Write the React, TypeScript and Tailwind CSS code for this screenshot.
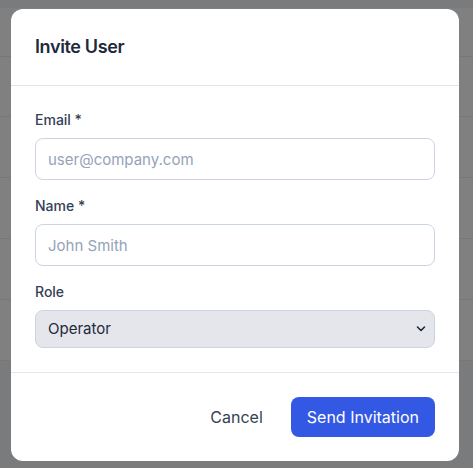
import React from "react";

export default function App() {
  const rows = [49, 60, 61, 61, 61, 61];
  return (
    <div className="relative h-[468px] w-[473px] overflow-hidden bg-[#7a7b7c]" style={{ fontFamily: "Inter, 'Noto Sans', sans-serif" }}>
      <div className="mt-[8px] flex flex-col">
        {rows.map((h, i) => (
          <div key={i} className="border-b border-[#767778] bg-[#808080]" style={{ height: h }} />
        ))}
      </div>
      <div className="absolute inset-0 flex items-start justify-center pt-[9px]">
        <div className="ml-[-3px] w-[448px] rounded-xl bg-white">
          <div className="border-b border-[#e2e4ec] px-6 pt-6 pb-6">
            <h2 className="text-lg font-semibold leading-7 tracking-[-0.02em] text-[#1e293b]">Invite User</h2>
          </div>
          <div className="flex flex-col gap-4 border-b border-[#e2e8f0] p-6">
            <div className="flex flex-col gap-2">
              <label className="text-sm font-medium leading-5 text-[#334155]">Email *</label>
              <input
                className="h-[42px] rounded-lg border border-[#cbd5e1] px-3 text-[15px] text-[#1e293b] outline-none placeholder:text-[#94a3b8]"
                placeholder="user@company.com"
              />
            </div>
            <div className="flex flex-col gap-2">
              <label className="text-sm font-medium leading-5 text-[#334155]">Name *</label>
              <input
                className="h-[42px] rounded-lg border border-[#cbd5e1] px-3 text-[15px] text-[#1e293b] outline-none placeholder:text-[#94a3b8]"
                placeholder="John Smith"
              />
            </div>
            <div className="flex flex-col gap-2">
              <label className="text-sm font-medium leading-5 text-[#334155]">Role</label>
              <div className="relative h-[38px] rounded-lg border border-[#cbd5e1] bg-[#e5e6eb]">
                <div className="flex h-full items-center px-3 text-[15px] text-[#1e293b]">Operator</div>
                <svg className="absolute right-[8px] top-[14px]" width="10" height="8" viewBox="0 0 10 8" fill="none">
                  <path d="M1.5 2 L5 5.5 L8.5 2" stroke="#1e293b" strokeWidth="1.6" strokeLinecap="round" strokeLinejoin="round" />
                </svg>
              </div>
            </div>
          </div>
          <div className="flex justify-end gap-3 p-6">
            <button className="h-10 rounded-lg px-4 text-base text-[#334155]">Cancel</button>
            <button className="h-10 rounded-lg bg-[#3358e4] px-4 text-base text-white">Send Invitation</button>
          </div>
        </div>
      </div>
    </div>
  );
}
